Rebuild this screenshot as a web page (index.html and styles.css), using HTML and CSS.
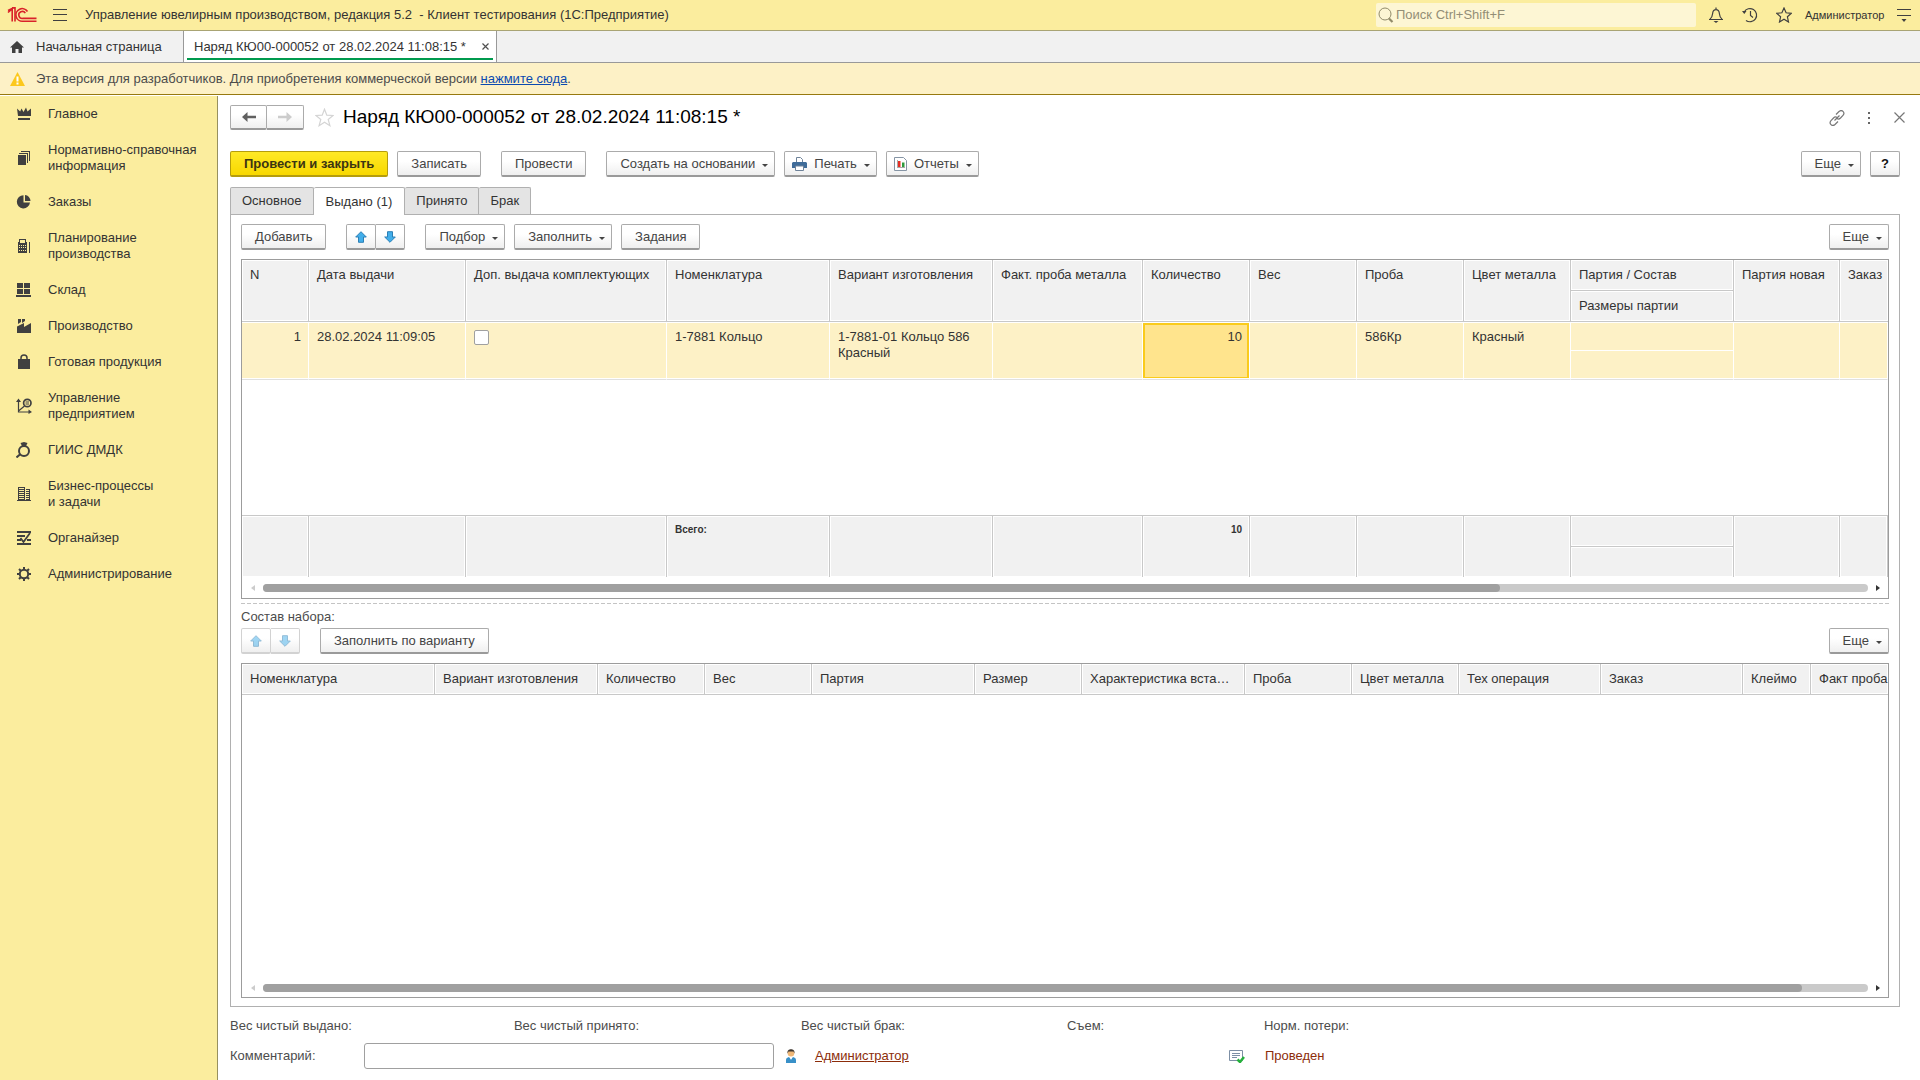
FILE: index.html
```html
<!DOCTYPE html>
<html lang="ru">
<head>
<meta charset="utf-8">
<title>Наряд КЮ00-000052 от 28.02.2024 11:08:15 *</title>
<link rel="stylesheet" href="styles.css">
</head>
<body>
<svg class="defs" aria-hidden="true">
  <symbol id="arrow-up" viewBox="0 0 12 12"><path d="M6 .7 11.3 6H8.500v5.300h-5V6H.7z" fill="#42aeea" stroke="#2b7fb5"/></symbol>
  <symbol id="arrow-down" viewBox="0 0 12 12"><path d="M6 11.300.7 6h2.800V.7h5V6h2.800z" fill="#42aeea" stroke="#2b7fb5"/></symbol>
</svg>
<header class="titlebar">
  <svg class="logo" width="30" height="16" viewBox="0 0 30 16" fill="none" stroke="#d9222a" stroke-width="1.600"><path d="M1 5.500 5.200 1.800V14.500M1 3.500 6.500.9H8V14.500"/><path d="M20.500 4.500A6.300 6.300 0 1 0 16 14.200H29.500"/><path d="M18.300 6.200A3.500 3.500 0 1 0 16 11.400H29.500"/></svg>
  <button class="icon-btn" aria-label="Главное меню"><svg width="14" height="12" viewBox="0 0 14 12" stroke="#404040" fill="none"><path d="M0 .5h14M0 5.500h14M0 11.500h14"/></svg></button>
  <div class="app-name">Управление ювелирным производством, редакция 5.2 &nbsp;- Клиент тестирования (1С:Предприятие)</div>
  <label class="search">
    <svg width="16" height="16" viewBox="0 0 16 16" fill="none" stroke="#918b6a"><circle cx="7" cy="7" r="6"/><path d="m11 11.500 3.500 3.500" stroke-width="2.200"/></svg>
    <input type="text" placeholder="Поиск Ctrl+Shift+F" aria-label="Поиск">
  </label>
  <div class="title-tools">
    <button class="icon-btn" aria-label="Оповещения"><svg width="16" height="16" viewBox="0 0 16 16" fill="none" stroke="#404040" stroke-width="1.200"><path d="M1 12.500h14M2 12c2.500-2 2.500-4 2.700-6C5 3.500 6 2.600 8 2.600s3 .9 3.300 3.400c.2 2 .2 4 2.700 6M8 .5v2"/><path d="M5.500 14h5L8 16z" fill="#404040" stroke="none"/></svg></button>
    <button class="icon-btn" aria-label="История"><svg width="16" height="16" viewBox="0 0 16 16" fill="none" stroke="#404040" stroke-width="1.200"><path d="M2.200 5A6.600 6.600 0 1 1 4 13.400M8.500 4v4.500l2.500 2"/><path d="M0 4h4.500L2.300 7z" fill="#404040" stroke="none"/></svg></button>
    <button class="icon-btn" aria-label="Избранное"><svg width="16" height="16" viewBox="0 0 16 16" fill="none" stroke="#404040" stroke-width="1.200"><path d="m8 1 2.100 4.800 5.200.5-3.900 3.500 1.100 5.200L8 12.300 3.500 15l1.100-5.200L.7 6.300l5.200-.5z"/></svg></button>
    <span class="user">Администратор</span>
    <button class="icon-btn" aria-label="Сервис"><svg width="14" height="13" viewBox="0 0 14 13"><path d="M0 .5h14M0 6.500h14" stroke="#404040"/><path d="M4.500 10h5L7 13z" fill="#404040"/></svg></button>
  </div>
</header>
<nav class="windows">
  <a class="window home" href="#"><svg width="14" height="12" viewBox="0 0 14 12" fill="#404040"><path d="M7 0 0 6.500h2V12h3.500V8h3v4H12V6.500h2z"/></svg>Начальная страница</a>
  <div class="window current"><a href="#">Наряд КЮ00-000052 от 28.02.2024 11:08:15 *</a><button class="icon-btn" aria-label="Закрыть вкладку"><svg width="7" height="7" viewBox="0 0 7 7" stroke="#505050" stroke-width="1.200"><path d="m.5.5 6 6m0-6-6 6"/></svg></button></div>
</nav>
<div class="notice">
  <svg width="15" height="14" viewBox="0 0 15 14"><path d="M7.500 0 15 14H0z" fill="#fcc81c"/><path d="M7.500 4.500v5M7.500 10.500v2" stroke="#fff" stroke-width="2"/></svg>
  <p>Эта версия для разработчиков. Для приобретения коммерческой версии <a href="#">нажмите сюда</a>.</p>
</div>
<div class="shell">
  <nav class="sections">
    <a href="#"><svg viewBox="0 0 16 16"><path d="m1 2.500 3.200 3L5.500 2.500l2 3.500 2.500-4.500L11.500 5.500l3.500-3V10H2zM2 12h12v2H2z"/></svg><span>Главное</span></a>
    <a href="#"><svg viewBox="0 0 16 16"><path d="M2 5h8v10H2zM3 3h9v10h-1V4H3zM5 1h9v10h-1V2H5z"/></svg><span>Нормативно-справочная<br>информация</span></a>
    <a href="#"><svg viewBox="0 0 16 16"><path d="M7.500 1.200V8.500H14A6.600 6.600 0 1 1 7.500 1.200z"/><path d="M9 1a6 6 0 0 1 5.500 6H9z"/></svg><span>Заказы</span></a>
    <a href="#"><svg viewBox="0 0 16 16"><path fill-rule="evenodd" d="M3 4V1h7v3h1v11H2V4zm1-2v3h5V2zM3 7v1h1V7zm2 0v1h1V7zm2 0v1h1V7zm2 0v1h1V7zm-6 2v1h1V9zm2 0v1h1V9zm2 0v1h1V9zm2 0v1h1V9zm-6 3v1h1v-1zm2 0v1h1v-1zm2 0v1h1v-1zm2 0v1h1v-1zM13 4h1v11h-1z"/></svg><span>Планирование<br>производства</span></a>
    <a href="#"><svg viewBox="0 0 16 16"><path d="M1 1h6v5H1zM8 1h6v5H8zM1 7h6v5H1zM8 7h6v5H8zM0 13h15v2H0z"/></svg><span>Склад</span></a>
    <a href="#"><svg viewBox="0 0 16 16"><path d="M2 1h3v3L2 6zM6 1h3v2L6 5zM1 8.500l7-3.500v4l7-4v10H1z"/></svg><span>Производство</span></a>
    <a href="#"><svg viewBox="0 0 16 16"><path d="M2 5h12v10H2z"/><path d="M5 7V4c0-4 6-4 6 0v3" fill="none" stroke="#404040" stroke-width="1.500"/></svg><span>Готовая продукция</span></a>
    <a href="#"><svg viewBox="0 0 16 16"><path d="M2.500 2v12H14M2.500 13l6-5" fill="none" stroke="#404040" stroke-width="1.200"/><path d="m0 4 2.500-3.500L5 4zM12.500 11.500 16 14l-3.500 2z"/><circle cx="11.300" cy="5" r="3.700" fill="none" stroke="#404040" stroke-width="1.700"/><path d="M9.500 3.500h3.500v1H9.500zM9.500 5.500h3.500v1H9.500z"/></svg><span>Управление<br>предприятием</span></a>
    <a href="#"><svg viewBox="0 0 16 16"><circle cx="8" cy="9" r="5" fill="none" stroke="#404040" stroke-width="2"/><path d="m4.500 1 3.500-1 3.500 1-2 4h-3z"/><path d="m4.500 12-4 3.500" stroke="#404040" stroke-width="2"/></svg><span>ГИИС ДМДК</span></a>
    <a href="#"><svg viewBox="0 0 16 16"><path d="M2 1h7v13H2zM10 3h4v11h-4zM1 14h14v1H1z"/><path d="M3 2.500h5M3 4.500h5M3 6.500h5M3 8.500h5M3 10.500h5M3 12.500h5M10 4.500h3M10 6.500h3M10 8.500h3M10 10.500h3M10 12.500h3" stroke="#fbed9e"/></svg><span>Бизнес-процессы<br>и задачи</span></a>
    <a href="#"><svg viewBox="0 0 16 16"><path d="M1 1h14v2H1zM1 5h8v2H1zM1 9h4v2H1zM1 13h14v2H1zM11 9h4v2h-4z"/><path d="m4.500 8 3 4L14 3" fill="none" stroke="#404040" stroke-width="1.800"/></svg><span>Органайзер</span></a>
    <a href="#"><svg viewBox="0 0 16 16"><circle cx="8" cy="8" r="4.200" fill="none" stroke="#404040" stroke-width="2"/><path d="M8 1v3M8 12v3M1 8h3M12 8h3M3 3l2 2M11 11l2 2M13 3l-2 2M5 11l-2 2" stroke="#404040" stroke-width="2"/></svg><span>Администрирование</span></a>
  </nav>
  <main class="form">
    <div class="form-head">
      <div class="pair">
        <button class="btn" aria-label="Назад"><svg width="14" height="10" viewBox="0 0 14 10"><path d="M14 3.800H5.500V0L0 5l5.500 5V6.200H14z" fill="#606060"/></svg></button>
        <button class="btn" aria-label="Вперед"><svg width="14" height="10" viewBox="0 0 14 10"><path d="M0 3.800h8.500V0L14 5l-5.500 5V6.200H0z" fill="#ccc"/></svg></button>
      </div>
      <button class="icon-btn" aria-label="В избранное"><svg width="19" height="19" viewBox="0 0 19 19" fill="none" stroke="#d4d4d4" stroke-width="1.200"><path d="m9.500 1.200 2.300 5.900 6.300.4-4.900 4 1.700 6.200-5.400-3.500-5.400 3.500 1.700-6.200-4.900-4 6.300-.4z"/></svg></button>
      <h1>Наряд КЮ00-000052 от 28.02.2024 11:08:15 *</h1>
      <div class="head-tools">
        <button class="icon-btn" aria-label="Ссылка"><svg width="16" height="16" viewBox="0 0 16 16" fill="none" stroke="#777" stroke-width="1.200"><path d="m7 4.500 3-3c2.800-2.500 6.500 1 4 3.800L11.500 8c-1 1-2.500 1.200-3.500.5M9 11.500l-3 3c-2.800 2.500-6.500-1-4-3.800L4.500 8C5.500 7 7 6.800 8 7.500M5.500 10.500l5-5"/></svg></button>
        <button class="icon-btn" aria-label="Ещё"><svg width="3" height="12" viewBox="0 0 3 12" fill="#666"><path d="M0 0h2v2H0zM0 5h2v2H0zM0 10h2v2H0z"/></svg></button>
        <button class="icon-btn" aria-label="Закрыть"><svg width="11" height="11" viewBox="0 0 11 11" stroke="#777" stroke-width="1.200"><path d="m.5.500 10 10m0-10-10 10"/></svg></button>
      </div>
    </div>
    <div class="bar commands">
      <div class="group"><button class="btn primary">Провести и закрыть</button><button class="btn">Записать</button></div>
      <button class="btn">Провести</button>
      <div class="group">
        <button class="btn menu">Создать на основании</button>
        <button class="btn menu with-icon"><svg width="15" height="14" viewBox="0 0 15 14"><path d="M4.500 5V.5h4l2 2V5" fill="#fff" stroke="#6e8299"/><path d="M1 5h13l1 1v5H0V6z" fill="#3f6c99"/><path d="M3.500 9h8v4.500h-8z" fill="#fff" stroke="#6e8299"/></svg>Печать</button>
        <button class="btn menu with-icon"><svg width="13" height="14" viewBox="0 0 13 14"><path d="M.5.5h9l3 3v10H.5z" fill="#fff" stroke="#8695a5"/><path d="M3.500 3v7.500M3 10.500h8" stroke="#aaa"/><path d="M4 4h2.500v6H4z" fill="#e62e24"/><path d="M8 5.500h2.500V10H8z" fill="#2e9a3c"/></svg>Отчеты</button>
      </div>
      <div class="group end"><button class="btn menu">Еще</button><button class="btn help">?</button></div>
    </div>
    <div class="tabs" role="tablist">
      <button role="tab">Основное</button><button role="tab" aria-selected="true" class="active">Выдано (1)</button><button role="tab">Принято</button><button role="tab">Брак</button>
    </div>
    <section class="panel">
      <div class="bar">
        <button class="btn">Добавить</button>
        <div class="pair small"><button class="btn" aria-label="Вверх"><svg width="12" height="12"><use href="#arrow-up"/></svg></button><button class="btn" aria-label="Вниз"><svg width="12" height="12"><use href="#arrow-down"/></svg></button></div>
        <div class="group"><button class="btn menu">Подбор</button><button class="btn menu">Заполнить</button><button class="btn">Задания</button></div>
        <div class="group end"><button class="btn menu">Еще</button></div>
      </div>
      <div class="frame issued">
        <div class="viewport">
        <table>
          <colgroup><col class="w67"><col class="w157"><col class="w201"><col class="w163"><col class="w163"><col class="w150"><col class="w107"><col class="w107"><col class="w107"><col class="w107"><col class="w163"><col class="w106"><col></colgroup>
          <thead>
            <tr><th rowspan="2">N</th><th rowspan="2">Дата выдачи</th><th rowspan="2">Доп. выдача комплектующих</th><th rowspan="2">Номенклатура</th><th rowspan="2">Вариант изготовления</th><th rowspan="2">Факт. проба металла</th><th rowspan="2">Количество</th><th rowspan="2">Вес</th><th rowspan="2">Проба</th><th rowspan="2">Цвет металла</th><th>Партия / Состав</th><th rowspan="2">Партия новая</th><th rowspan="2">Заказ</th></tr>
            <tr><th>Размеры партии</th></tr>
          </thead>
          <tbody>
            <tr><td rowspan="2" class="num">1</td><td rowspan="2">28.02.2024 11:09:05</td><td rowspan="2"><input type="checkbox" aria-label="Доп. выдача комплектующих"></td><td rowspan="2">1-7881 Кольцо</td><td rowspan="2">1-7881-01 Кольцо 586 Красный</td><td rowspan="2"></td><td rowspan="2" class="num selected">10</td><td rowspan="2"></td><td rowspan="2">586Кр</td><td rowspan="2">Красный</td><td class="upper"></td><td rowspan="2"></td><td rowspan="2"></td></tr>
            <tr><td class="lower"></td></tr>
            <tr class="filler"><td colspan="13"></td></tr>
          </tbody>
          <tfoot>
            <tr><td rowspan="2"></td><td rowspan="2"></td><td rowspan="2"></td><td rowspan="2">Всего:</td><td rowspan="2"></td><td rowspan="2"></td><td rowspan="2" class="num">10</td><td rowspan="2"></td><td rowspan="2"></td><td rowspan="2"></td><td></td><td rowspan="2"></td><td rowspan="2"></td></tr>
            <tr><td></td></tr>
          </tfoot>
        </table>
        </div>
        <div class="scroll"><i class="left"></i><div class="track"><div class="thumb" style="width:77.1%"></div></div><i class="right"></i></div>
      </div>
      <hr>
      <h2>Состав набора:</h2>
      <div class="bar">
        <div class="pair small off"><button class="btn" disabled aria-label="Вверх"><svg width="12" height="12"><use href="#arrow-up"/></svg></button><button class="btn" disabled aria-label="Вниз"><svg width="12" height="12"><use href="#arrow-down"/></svg></button></div>
        <button class="btn">Заполнить по варианту</button>
        <div class="group end"><button class="btn menu">Еще</button></div>
      </div>
      <div class="frame kit">
        <div class="viewport">
        <table>
          <colgroup><col class="w193"><col class="w163"><col class="w107"><col class="w107"><col class="w163"><col class="w107"><col class="w163"><col class="w107"><col class="w107"><col class="w142"><col class="w142"><col class="w68"><col></colgroup>
          <thead><tr><th>Номенклатура</th><th>Вариант изготовления</th><th>Количество</th><th>Вес</th><th>Партия</th><th>Размер</th><th>Характеристика вставки</th><th>Проба</th><th>Цвет металла</th><th>Тех операция</th><th>Заказ</th><th>Клеймо</th><th class="last">Факт проба</th></tr></thead>
          <tbody><tr class="filler"><td colspan="13"></td></tr></tbody>
        </table>
        </div>
        <div class="scroll"><i class="left"></i><div class="track"><div class="thumb" style="width:95.9%"></div></div><i class="right"></i></div>
      </div>
    </section>
    <footer class="summary">
      <div class="totals"><span>Вес чистый выдано:</span><span>Вес чистый принято:</span><span>Вес чистый брак:</span><span>Съем:</span><span>Норм. потери:</span></div>
      <div class="details">
        <label for="comment">Комментарий:</label>
        <input id="comment" type="text">
        <svg width="10" height="15" viewBox="0 0 10 15"><circle cx="5" cy="4.200" r="3.300" fill="#f0b878"/><path d="M1.500 4.500C1 1.500 3 .3 5 .3s4 1.200 3.500 4.200L7.500 2.500h-5z" fill="#403830"/><path d="M0 14V11c0-2 1.500-2.500 3-3l2 2 2-2c1.500.500 3 1 3 3v3z" fill="#3890c8"/><path d="m3.500 8 1.500 3 1.500-3z" fill="#fff"/></svg>
        <a href="#">Администратор</a>
        <svg width="16" height="13" viewBox="0 0 16 13"><path d="M.5.500h13v10H.5z" fill="#fff" stroke="#7d8fa5"/><path d="M3 3.500h8M3 5.500h8M3 7.500h5" stroke="#7d8fa5"/><path d="m8.500 9.500 2.500 2.500 4-5" fill="none" stroke="#25b03c" stroke-width="2.500"/></svg>
        <span class="status">Проведен</span>
      </div>
    </footer>
  </main>
</div>
</body>
</html>
```
FILE: styles.css
```css
* { box-sizing: border-box; }
body {
  margin: 0;
  height: 100vh;
  display: flex;
  flex-direction: column;
  font: 13px/16px "Liberation Sans", Arial, sans-serif;
  color: #333;
  background: #fff;
}
button, input { font: inherit; color: inherit; }
p, h1, h2 { margin: 0; }
svg { flex: none; display: block; }
.defs { position: absolute; width: 0; height: 0; }
.icon-btn { border: 0; padding: 0; background: none; display: flex; }

.titlebar {
  display: flex;
  align-items: center;
  height: 31px;
  padding: 0 9px 0 7px;
  background: #fbed9e;
  border-bottom: 1px solid #a9a474;
}
.titlebar > .icon-btn { margin: 0 18px 0 16px; }
.app-name { flex: 1; white-space: nowrap; }
.search {
  display: flex;
  align-items: center;
  width: 320px;
  height: 24px;
  padding: 0 2px;
  gap: 2px;
  margin: 0 12px 1px 0;
  background: #fdf6d4;
  border-radius: 2px;
}
.search input { flex: 1; min-width: 0; height: 20px; border: 0; padding: 0; background: none; outline: 0; }
.search input::placeholder { color: #938e76; opacity: 1; }
.title-tools { display: flex; align-items: center; gap: 18px; }
.user { font-size: 11px; width: 78px; margin: 0 -4px 0 -5px; }

.windows { display: flex; height: 32px; background: #f1f1f1; border-bottom: 1px solid #999; }
.window { display: flex; align-items: center; color: #333; text-decoration: none; }
.window a { color: inherit; text-decoration: none; }
.home { width: 183px; padding-left: 10px; gap: 12px; }
.current {
  width: 314px;
  padding: 0 7px 0 10px;
  justify-content: space-between;
  background: linear-gradient(#009a4e, #009a4e) center 27px / 306px 2px no-repeat #fff;
  border: solid #999;
  border-width: 0 1px;
}
.notice {
  display: flex;
  align-items: center;
  gap: 11px;
  height: 32px;
  padding-left: 10px;
  color: #4c4c4c;
  background: #fdf1c6;
  border-bottom: 1px solid #97790f;
}
.notice a { color: #0b4ab0; }

.shell { flex: 1; display: flex; min-height: 0; padding-top: 1px; }
.sections { width: 218px; flex: none; background: #fbed9e; border-right: 1px solid #97905f; }
.sections a { display: flex; align-items: center; gap: 16px; padding: 10px 0 10px 16px; color: #333; text-decoration: none; }
.sections svg { width: 16px; height: 16px; margin: -2px 0; fill: #404040; }

.form { flex: 1; min-width: 0; display: flex; flex-direction: column; padding: 9px 20px 11px 12px; }
.form-head { display: flex; align-items: center; height: 25px; gap: 11px; }
h1 { font-size: 19px; line-height: 24px; font-weight: normal; color: #000; margin: 0 0 2px -2px; }
.head-tools { display: flex; align-items: center; gap: 23px; margin-left: auto; margin-right: -5px; }

.btn {
  height: 26px;
  padding: 1px 13px 0;
  border: 1px solid #ababab;
  border-bottom: 2px solid #9a9a9a;
  border-radius: 2px;
  background: linear-gradient(#fff 40%, #efefef);
  color: #444;
  white-space: nowrap;
}
.btn.primary { font-weight: bold; color: #3c3512; background: linear-gradient(#ffe926, #f8d800); border-color: #b59d0c; }
.menu { display: flex; align-items: center; gap: 7px; padding-right: 6px; }
.menu::after { content: ""; border: solid transparent; border-width: 3px 3px 0; border-top-color: #444; margin-top: 3px; }
.with-icon { padding-left: 7px; }
.help { width: 30px; padding: 1px 0 0; font-weight: bold; color: #111; }
.pair { display: flex; }
.pair .btn { display: flex; align-items: center; justify-content: center; width: 37px; height: 25px; padding: 0; }
.pair .btn + .btn { border-left: 0; border-radius: 0 2px 2px 0; }
.pair.small .btn { width: 29px; height: 26px; padding-top: 1px; }
.pair.small .btn:first-child { width: 30px; }
.pair.off .btn { border-color: #d2d2d2; }
.pair.off svg { opacity: .5; }
.bar { display: flex; gap: 20px; flex: none; }
.group { display: flex; gap: 9px; }
.end { margin-left: auto; }
.commands { margin-top: 21px; }

.tabs { display: flex; margin-top: 10px; height: 27px; flex: none; }
.tabs button {
  height: 27px;
  padding: 0 11px;
  border: 1px solid #b0b0b0;
  border-left-width: 0;
  border-bottom: 0;
  background: #e4e4e4;
  border-radius: 2px 2px 0 0;
}
.tabs button:first-child { border-left-width: 1px; }
.tabs .active { position: relative; height: 28px; padding: 0 12px; background: #fff; }

.panel { flex: 1; min-height: 0; display: flex; flex-direction: column; border: 1px solid #b0b0b0; padding: 9px 10px 8px; }
.frame { display: flex; flex-direction: column; min-height: 0; margin-top: 9px; border: 1px solid #9c9c9c; }
.issued { flex: 340 1 0; }
.kit { flex: 335 1 0; }
.viewport { flex: 1; min-height: 0; overflow: hidden; display: grid; }
table { width: 100%; height: 100%; table-layout: fixed; border-spacing: 0; }
.w67 { width: 67px; } .w68 { width: 68px; } .w106 { width: 106px; } .w107 { width: 107px; }
.w142 { width: 142px; } .w150 { width: 150px; } .w157 { width: 157px; } .w163 { width: 163px; }
.w193 { width: 193px; } .w201 { width: 201px; }
th, td { padding: 6px 8px; text-align: left; vertical-align: top; font-weight: normal; }
th {
  height: 31px;
  padding-top: 7px;
  background: #f1f1f1;
  border: solid #c8c8c8;
  border-width: 0 1px 1px 0;
  box-shadow: inset 0 0 0 1px #fff;
  white-space: nowrap;
  overflow: hidden;
  text-overflow: ellipsis;
}
th:last-child[rowspan], .last { text-overflow: clip; border-right: 0; }
th.last { padding-right: 0; }
tbody td { height: 29px; background: #fdf1c6; border: solid #fff; border-width: 1px 1px 0 0; box-shadow: inset 0 -1px #fff; border-bottom: 1px solid #e0e0e0; }
tbody .upper { height: 28px; border-bottom: 0; box-shadow: none; }
tbody .lower { height: 30px; }
tbody .selected { background: #ffe48d; box-shadow: inset 0 -1px #fff, inset 0 0 0 2px #facb1c; }
tbody .filler td { height: auto; background: #fff; border: 0; box-shadow: none; }
td.num { text-align: right; padding-right: 7px; }
td input { display: block; appearance: none; width: 15px; height: 15px; margin: 1px 0 0; background: #fff; border: 1px solid #a0a0a0; border-radius: 2px; }
tfoot td { height: 31px; background: #f1f1f1; border: solid #c8c8c8; border-width: 1px 1px 0 0; box-shadow: inset 0 0 0 1px #fff; font-size: 10px; font-weight: bold; }

.scroll { display: flex; align-items: center; gap: 8px; height: 21px; padding: 2px 8px 0 9px; flex: none; }
.track { flex: 1; height: 8px; border-radius: 4px; background: #cacaca; }
.thumb { height: 8px; border-radius: 4px; background: #a0a0a0; }
.scroll i { border: solid transparent; border-width: 3px 0; }
.scroll .left { border-right: 4px solid #ccc; }
.scroll .right { border-left: 4px solid #333; }
hr { width: 100%; height: 1px; margin: 4px 0 5px; border: 0; flex: none; background: repeating-linear-gradient(90deg, #c4c4c4 0 4px, transparent 4px 6px); }
h2 { font-size: 13px; line-height: 16px; font-weight: normal; color: #4c4c4c; margin-bottom: 3px; }

.summary { color: #4c4c4c; padding-top: 11px; }
.totals, .details { display: grid; align-items: center; }
.totals { grid-template-columns: 17% 287fr 266fr 197fr 636fr; }
.details { grid-template-columns: 134px 410px 41px 414px 36px 1fr; margin-top: 9px; }
.details input { height: 26px; border: 1px solid #a0a0a0; border-radius: 3px; }
.details input + svg { margin-left: 12px; }
.details a, .status { color: #8c2d0a; }
```
